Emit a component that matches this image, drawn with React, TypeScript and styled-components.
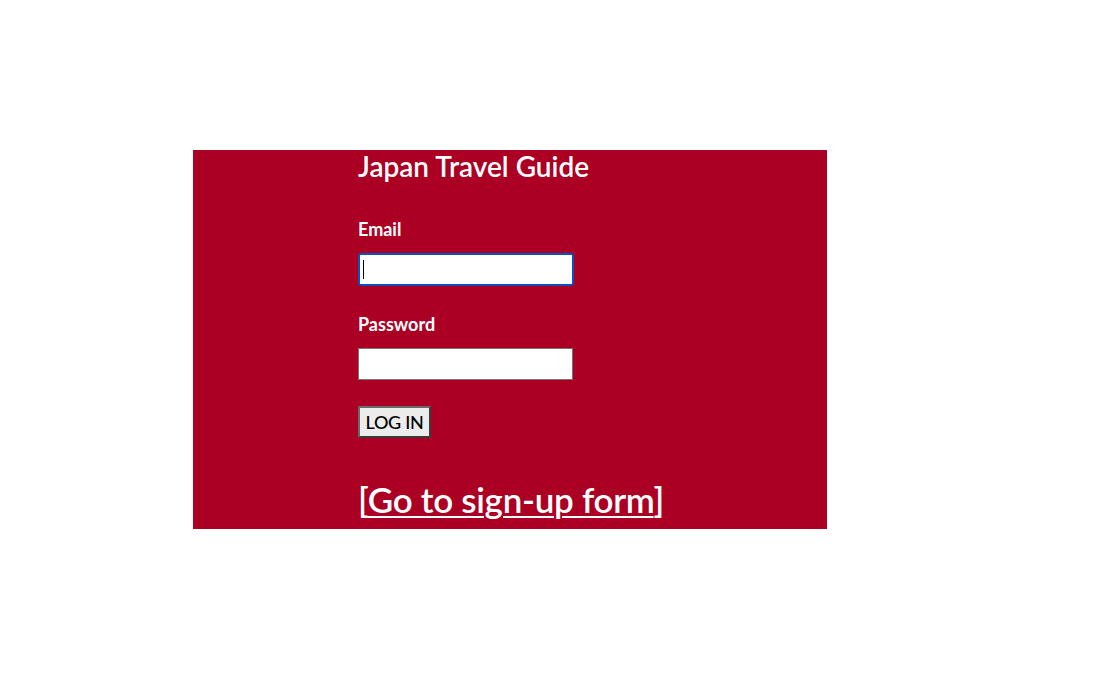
import React from "react";
import styled, { createGlobalStyle } from "styled-components";

const Global = createGlobalStyle`
  html, body { margin: 0; padding: 0; background: #ffffff; }
  body { font-family: Lato, "Open Sans", sans-serif; }
`;

const Page = styled.div`
  padding-top: 150px;
  padding-left: 193px;
`;

const Panel = styled.main`
  width: 634px;
  height: 379px;
  box-sizing: border-box;
  background: #ab0023;
  color: #ffffff;
  padding-left: 165px;
  display: flex;
  flex-direction: column;
  align-items: flex-start;
`;

const Title = styled.h1`
  margin: 0;
  font-size: 28px;
  font-weight: 600;
  line-height: 32px;
  letter-spacing: 0;
`;

const Form = styled.form`
  display: flex;
  flex-direction: column;
  align-items: flex-start;
  margin-top: 36px;
`;

const Label = styled.label<{ $top?: number }>`
  font-size: 18px;
  font-weight: 700;
  line-height: 22px;
  margin-top: ${(p) => p.$top ?? 0}px;
`;

const FieldWrap = styled.div`
  position: relative;
  margin-top: 13px;
`;

const Input = styled.input<{ $focused?: boolean }>`
  display: block;
  box-sizing: border-box;
  width: ${(p) => (p.$focused ? 216 : 215)}px;
  height: ${(p) => (p.$focused ? 33 : 32)}px;
  margin: 0;
  background: #ffffff;
  border: ${(p) => (p.$focused ? "2px solid #0b4fc2" : "1px solid #767676")};
  border-radius: ${(p) => (p.$focused ? "3px" : "0")};
  outline: ${(p) => (p.$focused ? "1px solid #ffffff" : "none")};
  outline-offset: -3px;
  font-size: 16px;
`;

const Caret = styled.span`
  position: absolute;
  left: 5px;
  top: 7px;
  width: 1px;
  height: 19px;
  background: #000000;
`;

const Button = styled.button`
  margin-top: 26px;
  width: 73px;
  height: 32px;
  box-sizing: border-box;
  background: #ececec;
  border: 2px solid #3a3a3a;
  border-top-color: #6a6a6a;
  border-left-color: #6a6a6a;
  color: #000000;
  font-family: Lato, sans-serif;
  font-size: 18px;
  font-weight: 500;
  padding: 0;
  letter-spacing: -0.3px;
`;

const SignUp = styled.p`
  margin: 41px 0 0;
  font-size: 35px;
  line-height: 40px;
  font-weight: 600;
  letter-spacing: -0.3px;
`;

const Link = styled.a`
  color: #ffffff;
  text-decoration: underline;
  text-decoration-thickness: 2px;
  text-underline-offset: 3px;
`;

export default function App() {
  return (
    <>
      <Global />
      <Page>
        <Panel>
          <Title>Japan Travel Guide</Title>
          <Form onSubmit={(e) => e.preventDefault()}>
            <Label htmlFor="email">Email</Label>
            <FieldWrap>
              <Input id="email" type="email" $focused />
              <Caret />
            </FieldWrap>
            <Label htmlFor="password" $top={27}>Password</Label>
            <FieldWrap>
              <Input id="password" type="password" />
            </FieldWrap>
            <Button type="submit">LOG IN</Button>
          </Form>
          <SignUp>
            [<Link href="#">Go to sign-up form</Link>]
          </SignUp>
        </Panel>
      </Page>
    </>
  );
}
